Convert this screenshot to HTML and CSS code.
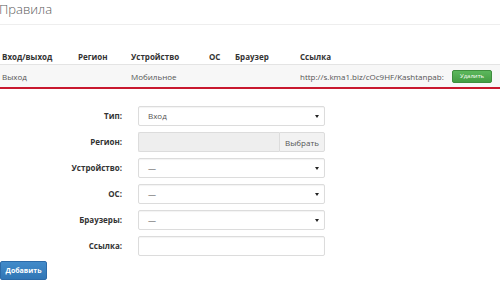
FILE: index.html
```html
<!DOCTYPE html>
<html lang="ru">
<head>
  <meta charset="UTF-8" />
  <title>Правила</title>
  <link rel="stylesheet" href="styles.css">
</head>
<body>
  <div class="page-title">Правила</div>

  <table class="rules">
    <thead>
      <tr>
        <th class="c-dir">Вход/выход</th>
        <th class="c-region">Регион</th>
        <th class="c-device">Устройство</th>
        <th class="c-os">ОС</th>
        <th class="c-browser">Браузер</th>
        <th class="c-link">Ссылка</th>
        <th class="c-action"></th>
      </tr>
    </thead>
    <tbody>
      <tr class="marked">
        <td>Выход</td>
        <td></td>
        <td>Мобильное</td>
        <td></td>
        <td></td>
        <td>http://s.kma1.biz/cOc9HF/Kashtanpab:</td>
        <td><button class="btn-delete">Удалить</button></td>
      </tr>
    </tbody>
  </table>

  <form class="rule-form">
    <label>Тип:</label>
    <div class="select">Вход<span class="caret"></span></div>

    <label>Регион:</label>
    <div class="picker">
      <div class="picker-field"></div>
      <button type="button" class="picker-btn">Выбрать</button>
    </div>

    <label>Устройство:</label>
    <div class="select">—<span class="caret"></span></div>

    <label>ОС:</label>
    <div class="select">—<span class="caret"></span></div>

    <label>Браузеры:</label>
    <div class="select">—<span class="caret"></span></div>

    <label>Ссылка:</label>
    <div class="text-input"></div>
  </form>

  <button class="btn-add">Добавить</button>
</body>
</html>
```

FILE: styles.css
```css
body {
  margin: 0;
  background: #fff;
  font-family: "Open Sans", "Liberation Sans", sans-serif;
  font-size: 8px;
  color: #555;
  overflow: hidden;
}
.page-title {
  font-size: 13px;
  font-weight: 300;
  color: #5a5a5a;
  height: 24px;
  line-height: 18px;
  margin-left: -1px;
  border-bottom: 1px solid #eee;
}
.rules {
  margin-top: 24px;
  width: 500px;
  border-collapse: collapse;
  table-layout: fixed;
}
.rules th,
.rules td {
  padding: 0 0 0 2px;
  text-align: left;
  white-space: nowrap;
  overflow: hidden;
}
.rules th {
  height: 15px;
  font-weight: bold;
  color: #333;
  border-bottom: 1px solid #e4e4e4;
}
.rules td {
  height: 22px;
  background: #f7f7f7;
  border-bottom: 2px solid #c8182e;
}
.c-dir { width: 74px; }
.c-region { width: 51px; }
.c-device { width: 76px; }
.c-os { width: 24px; }
.c-browser { width: 63px; }
.c-link { width: 152px; }
.rules td:last-child { padding-left: 0; }
.btn-delete {
  font-family: inherit;
  font-size: 6px;
  color: #fff;
  width: 40px;
  height: 13px;
  padding: 0;
  border: 1px solid #3e8e3e;
  border-radius: 2px;
  background: linear-gradient(#5cb85c, #449d44);
}
.rule-form {
  display: grid;
  grid-template-columns: 122px 187px;
  column-gap: 16px;
  row-gap: 6px;
  margin-top: 17px;
}
.rule-form label {
  font-weight: bold;
  color: #333;
  text-align: right;
  line-height: 20px;
}
.select,
.text-input {
  position: relative;
  height: 18px;
  line-height: 18px;
  padding-left: 9px;
  border: 1px solid #dcdcdc;
  border-radius: 2px;
  background: #fff;
  box-shadow: inset 0 1px 1px rgba(0,0,0,0.05);
}
.caret {
  position: absolute;
  right: 5px;
  top: 8px;
  border-left: 2px solid transparent;
  border-right: 2px solid transparent;
  border-top: 3px solid #222;
}
.picker {
  display: flex;
  height: 20px;
}
.picker-field {
  flex: 1;
  background: #eee;
  border: 1px solid #dcdcdc;
  border-right: none;
  border-radius: 2px 0 0 2px;
}
.picker-btn {
  width: 46px;
  padding: 0;
  font-family: inherit;
  font-size: 8px;
  color: #555;
  background: #f2f2f2;
  border: 1px solid #dcdcdc;
  border-radius: 0 2px 2px 0;
}
.btn-add {
  display: block;
  margin-top: 5px;
  width: 47px;
  height: 19px;
  padding: 0;
  font-family: inherit;
  font-size: 7px;
  font-weight: bold;
  color: #fff;
  border: 1px solid #2c6aa8;
  border-radius: 2px;
  background: linear-gradient(#428bca, #3176b5);
}
```
